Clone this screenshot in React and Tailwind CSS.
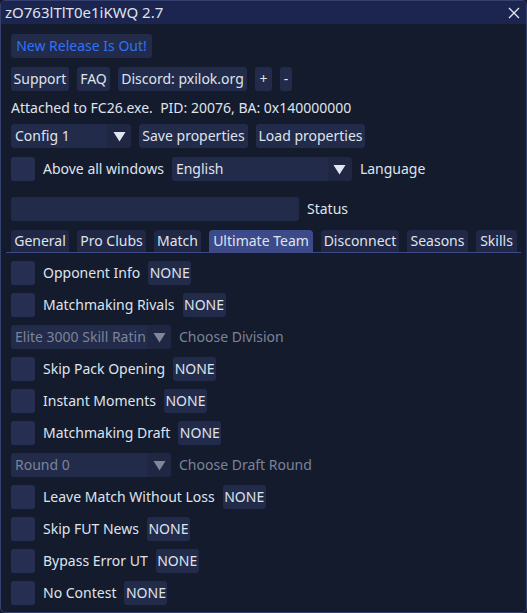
import React from "react";

const FONT = { fontFamily: '"Noto Sans", "Open Sans", sans-serif' };

function Btn({ children, w, className = "" }) {
  return (
    <div
      className={
        "flex h-[24px] shrink-0 items-center justify-center overflow-hidden rounded-[3px] bg-[#232b4a] whitespace-nowrap " +
        className
      }
      style={{ width: w }}
    >
      {children}
    </div>
  );
}

function Check() {
  return <div className="h-[24px] w-[24px] shrink-0 rounded-[3px] bg-[#262f52]" />;
}

function Arrow() {
  return (
    <svg width="13" height="11" viewBox="0 0 13 11">
      <path d="M0.5 1 L12.5 1 L6.5 10.5 Z" fill="#e2e6ef" />
    </svg>
  );
}

function Combo({ w, text, dim }) {
  return (
    <div
      className="flex h-[24px] shrink-0 overflow-hidden rounded-[3px]"
      style={{ width: w }}
    >
      <div
        className={
          "flex flex-1 items-center overflow-hidden whitespace-nowrap bg-[#232b4a] px-[4px] " +
          (dim ? "text-[#7c8399]" : "")
        }
      >
        {text}
      </div>
      <div className="flex w-[24px] items-center justify-center bg-[#1f2743]">
        <span className={dim ? "opacity-50" : ""}>
          <Arrow />
        </span>
      </div>
    </div>
  );
}

function Option({ label }) {
  return (
    <div className="flex items-center gap-[8px]">
      <Check />
      <span className="whitespace-nowrap">{label}</span>
      <Btn w={43}>NONE</Btn>
    </div>
  );
}

const tabs = [
  ["General", 58],
  ["Pro Clubs", 69],
  ["Match", 47],
  ["Ultimate Team", 104],
  ["Disconnect", 78],
  ["Seasons", 61],
  ["Skills", 41],
];

export default function App() {
  return (
    <div
      className="h-[613px] w-[527px] overflow-hidden bg-[#141b2d] text-[14px] leading-none text-[#dfe3ec]"
      style={FONT}
    >
      <div className="flex h-full flex-col overflow-hidden rounded-[5px] border border-[#34406e] bg-[#141b2d]">
        {/* title bar */}
        <div className="flex h-[23px] shrink-0 items-center justify-between bg-[#1c2550] pl-[4px] pr-[6px] text-[15px]">
          <span>zO763lTlT0e1iKWQ 2.7</span>
          <svg width="12" height="12" viewBox="0 0 12 12">
            <path d="M1 1 L11 11 M11 1 L1 11" stroke="#e6e9f1" strokeWidth="1.3" />
          </svg>
        </div>

        <div className="flex flex-col gap-[8px] px-[10px] pt-[10px]">
          <div className="flex">
            <Btn w={141} className="text-[#2f72f5]">New Release Is Out!</Btn>
          </div>

          <div className="mt-[1px] flex gap-[8px]">
            <Btn w={58}>Support</Btn>
            <Btn w={33}>FAQ</Btn>
            <Btn w={129}>Discord: pxilok.org</Btn>
            <Btn w={17}>+</Btn>
            <Btn w={12}>-</Btn>
          </div>

          <div className="flex h-[17px] items-center whitespace-pre">
            Attached to FC26.exe.  PID: 20076, BA: 0x140000000
          </div>

          <div className="flex gap-[8px]">
            <Combo w={120} text="Config 1" />
            <Btn w={109}>Save properties</Btn>
            <Btn w={109}>Load properties</Btn>
          </div>

          <div className="mt-[1px] flex items-center gap-[8px]">
            <Check />
            <span>Above all windows</span>
            <Combo w={180} text="English" />
            <span>Language</span>
          </div>

          <div className="mt-[8px] flex items-center gap-[8px]">
            <div className="h-[24px] w-[288px] rounded-[3px] bg-[#232b4a]" />
            <span>Status</span>
          </div>

          {/* tabs */}
          <div className="-mx-[5px] mt-[1px] flex gap-[8px] border-b border-[#3d4a87] px-[5px]">
            {tabs.map(([t, w]) => (
              <div
                key={t}
                className={
                  "flex h-[22px] shrink-0 items-center justify-center whitespace-nowrap rounded-t-[4px] " +
                  (t === "Ultimate Team" ? "bg-[#3d4a8a]" : "bg-[#202846]")
                }
                style={{ width: w }}
              >
                {t}
              </div>
            ))}
          </div>

          <Option label="Opponent Info" />
          <Option label="Matchmaking Rivals" />
          <div className="flex items-center gap-[8px]">
            <Combo w={160} text="Elite 3000 Skill Ratin" dim />
            <span className="text-[#7c8399]">Choose Division</span>
          </div>
          <Option label="Skip Pack Opening" />
          <Option label="Instant Moments" />
          <Option label="Matchmaking Draft" />
          <div className="flex items-center gap-[8px]">
            <Combo w={160} text="Round 0" dim />
            <span className="text-[#7c8399]">Choose Draft Round</span>
          </div>
          <Option label="Leave Match Without Loss" />
          <Option label="Skip FUT News" />
          <Option label="Bypass Error UT" />
          <Option label="No Contest" />
        </div>
      </div>
    </div>
  );
}
